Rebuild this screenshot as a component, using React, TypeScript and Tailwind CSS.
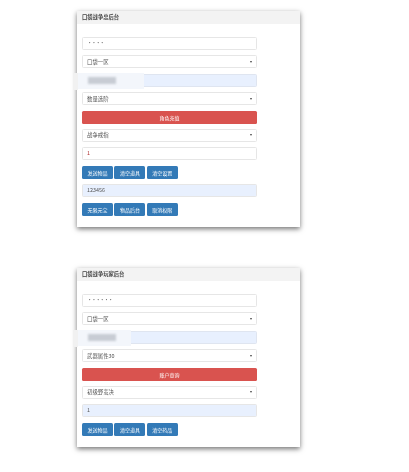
const Field = ({ value, filled, red, dots }: { value: string; filled?: boolean; red?: boolean; dots?: boolean }) => (
  <div
    className={`h-[13px] rounded-[1.5px] border border-[#e6e6e6] px-[4px] text-[5.4px] leading-[11px] ${
      filled ? 'bg-[#e8f0fe]' : 'bg-white'
    } ${red ? 'text-[#b03030]' : 'text-[#555]'} ${dots ? 'tracking-[-1.2px]' : ''}`}
  >
    {value}
  </div>
);

const Select = ({ value }: { value: string }) => (
  <div className="flex h-[13px] items-center justify-between rounded-[1.5px] border border-[#e6e6e6] bg-white pl-[4px] pr-[4px] text-[5.4px] text-[#555]">
    <span>{value}</span>
    <span className="h-0 w-0 border-x-[1.5px] border-t-[2px] border-x-transparent border-t-[#444]" />
  </div>
);

// the smeared out account name in the third row
const Smear = ({ wide }: { wide?: boolean }) => (
  <div className="relative h-[13px] rounded-[1.5px] border border-[#dfe5f0] bg-[#e8f0fe]">
    <div className="absolute left-[-10px] top-[-2px] h-[17px] w-[5px] bg-[#f1f1f1]" />
    <div
      className={`absolute left-[-5px] top-[-2px] h-[16px] bg-[#f3f6fb] blur-[0.5px] ${wide ? 'w-[66px]' : 'w-[53px]'}`}
    />
    <div className="absolute left-[5px] top-[2px] h-[7px] w-[28px] bg-[#c8ccd4] blur-[1px]" />
  </div>
);

const RedBar = ({ label }: { label: string }) => (
  <button className="h-[13px] rounded-[1.5px] bg-[#d9534f] text-center text-[5px] leading-[13px] text-white">
    {label}
  </button>
);

const Buttons = ({ labels }: { labels: string[] }) => (
  <div className="flex gap-[1.4px]">
    {labels.map((label) => (
      <button
        key={label}
        className="h-[13px] w-[31px] rounded-[1.5px] bg-[#337ab7] text-center text-[5px] leading-[13px] text-white"
      >
        {label}
      </button>
    ))}
  </div>
);

const Card = ({ title, className, children }: { title: string; className: string; children: React.ReactNode }) => (
  <div className={`ml-[77px] w-[223px] bg-white shadow-[0_2px_5px_rgba(0,0,0,0.55)] ${className}`}>
    <div className="h-[13px] bg-[#f3f3f3] pl-[5px] text-[5.3px] font-bold leading-[13px] text-[#444]">{title}</div>
    <div className="flex w-[180px] flex-col gap-[5.4px] pl-[5px] pt-[13px]">{children}</div>
  </div>
);

export default function App() {
  return (
    <div
      className="h-[472px] w-[409px] overflow-hidden bg-white pt-[11px] blur-[0.5px]"
      style={{ fontFamily: '"Noto Sans CJK SC", "Liberation Sans", sans-serif' }}
    >
      <Card title="口袋战争总后台" className="h-[216px]">
        <Field value="••••" dots />
        <Select value="口袋一区" />
        <Smear wide />
        <Select value="数量选阶" />
        <RedBar label="角色充值" />
        <Select value="战争戒指" />
        <Field value="1" red />
        <Buttons labels={['发送物品', '清空道具', '清空设置']} />
        <Field value="123456" filled />
        <Buttons labels={['无限元宝', '物品后台', '取消权限']} />
      </Card>
      <Card title="口袋战争玩家后台" className="mt-[41px] h-[179px]">
        <Field value="••••••" dots />
        <Select value="口袋一区" />
        <Smear />
        <Select value="武器属性30" />
        <RedBar label="账户查询" />
        <Select value="初级野蛮决" />
        <Field value="1" filled />
        <Buttons labels={['发送物品', '清空道具', '清空药品']} />
      </Card>
    </div>
  );
}
